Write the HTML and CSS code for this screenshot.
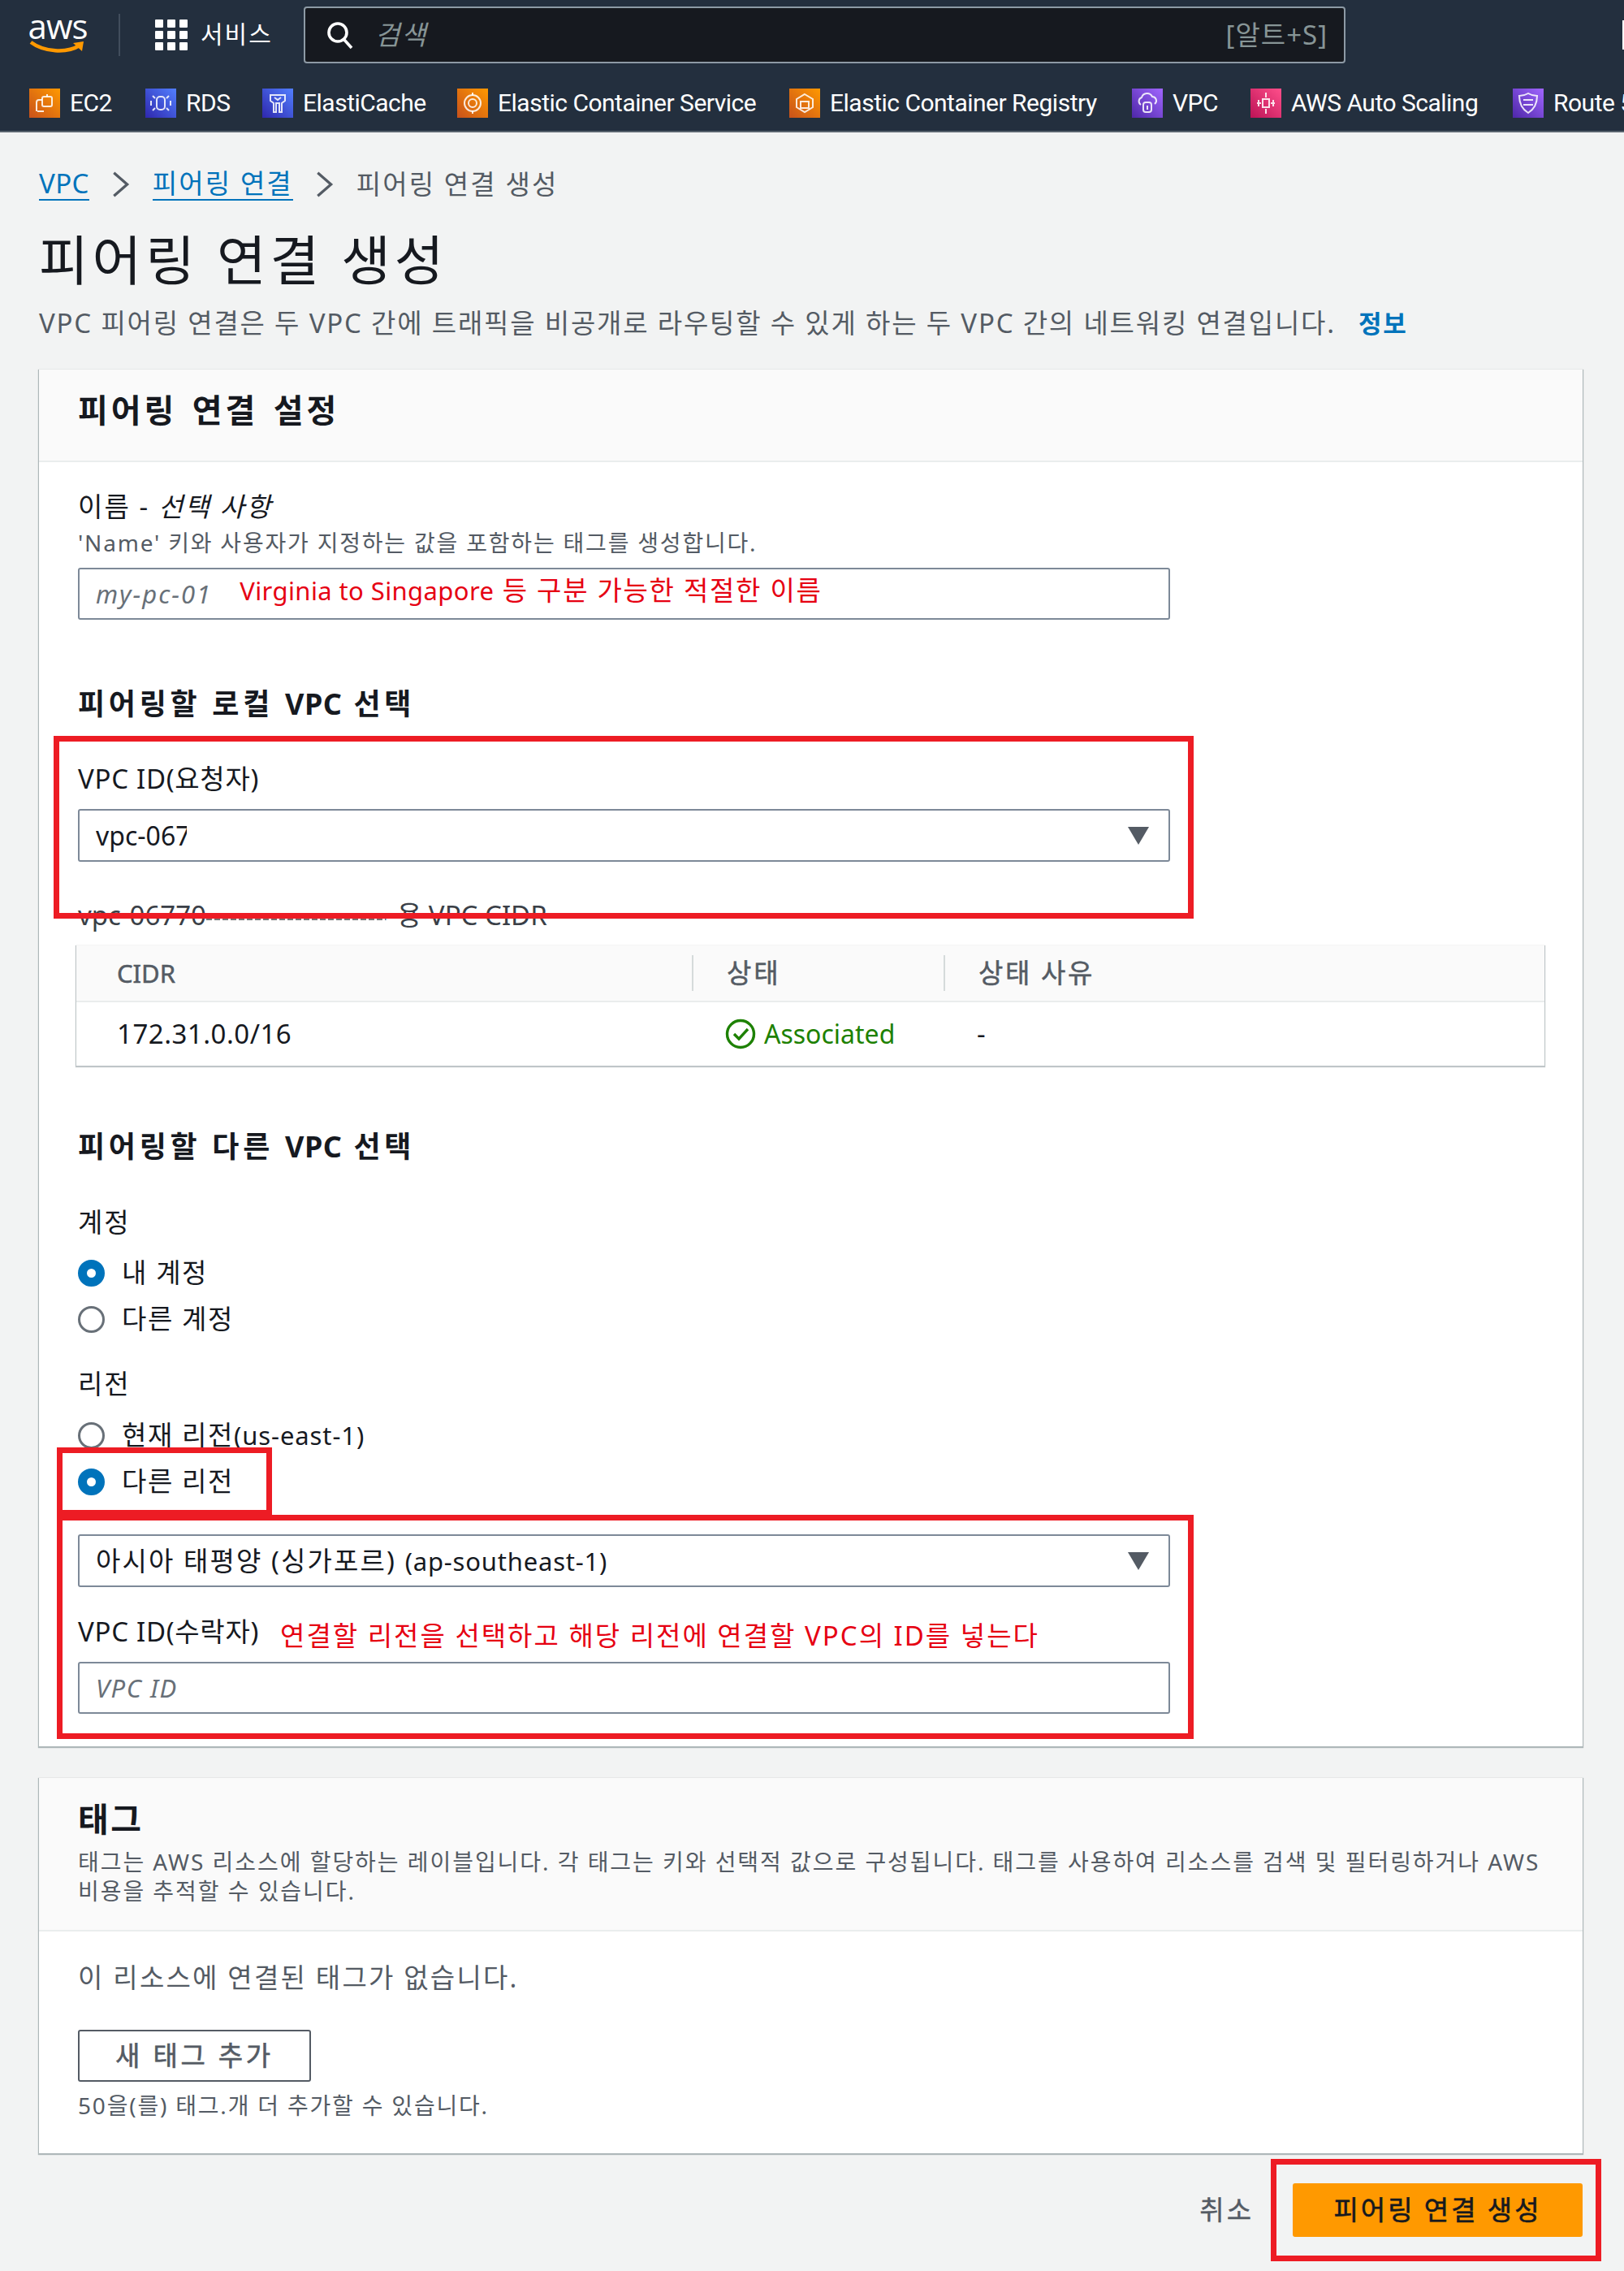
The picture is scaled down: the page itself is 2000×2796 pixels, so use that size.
FILE: index.html
```html
<!DOCTYPE html>
<html lang="ko">
<head>
<meta charset="utf-8">
<title>피어링 연결 생성</title>
<link rel="stylesheet" href="styles.css">
</head>
<body>
<div class="page">
  <header class="topbar">
    <div class="toprow">
      <div class="logo">
        <span class="logo-text">aws</span>
        <svg class="smile" viewBox="0 0 70 18"><path d="M2 3C18 15 46 17 62 7" fill="none" stroke="#f90" stroke-width="4.5"/><path d="M54 4l13-2-2 12z" fill="#f90"/></svg>
      </div>
      <div class="vsep"></div>
      <div class="grid-icon"><i></i><i></i><i></i><i></i><i></i><i></i><i></i><i></i><i></i></div>
      <span class="services">서비스</span>
      <div class="search">
        <svg class="search-icon" viewBox="0 0 36 36"><circle cx="16" cy="15" r="11" fill="none" stroke="#fff" stroke-width="3.6"/><path d="M24 24l9 10" stroke="#fff" stroke-width="3.6"/></svg>
        <span class="search-ph">검색</span>
        <span class="search-key">[알트+S]</span>
      </div>
    </div>
    <nav class="favs">
      <a class="fav w-ec2"><span class="ico orange"><svg viewBox="0 0 38 36"><rect x="16" y="10" width="12" height="12" rx="2"/><path d="M16 14h-4a3 3 0 0 0-3 3v11M22 10V7M10 28h8"/></svg></span>EC2</a>
      <a class="fav w-rds"><span class="ico blue"><svg viewBox="0 0 38 36"><rect x="14" y="10" width="10" height="16" rx="4"/><path d="M9 9l3 3M29 9l-3 3M9 27l3-3M29 27l-3-3M7 15v6M31 15v6"/></svg></span>RDS</a>
      <a class="fav w-cache"><span class="ico blue"><svg viewBox="0 0 38 36"><path d="M10 8h18v7l-4 3v11h-3V18h-4v11h-3V18l-4-3z"/><path d="M15 11l4 3 4-3"/></svg></span>ElastiCache</a>
      <a class="fav w-ecs"><span class="ico orange"><svg viewBox="0 0 38 36"><circle cx="19" cy="18" r="10"/><circle cx="19" cy="18" r="5"/><path d="M19 5v4M19 27v4"/></svg></span>Elastic Container Service</a>
      <a class="fav w-ecr"><span class="ico orange"><svg viewBox="0 0 38 36"><path d="M19 7l10 6v10l-10 6-10-6V13z"/><path d="M14 16h10v8H14z"/></svg></span>Elastic Container Registry</a>
      <a class="fav w-vpc"><span class="ico purple"><svg viewBox="0 0 38 36"><path d="M11 20a5 5 0 0 1 1-9 7 7 0 0 1 13-1 5 5 0 0 1 3 9"/><rect x="14" y="17" width="10" height="12" rx="3"/><path d="M19 21v5"/></svg></span>VPC</a>
      <a class="fav w-scale"><span class="ico pink"><svg viewBox="0 0 38 36"><rect x="15" y="13" width="8" height="10"/><path d="M19 5v6M19 25v6M8 18h5M25 18h5M10 14v8M28 14v8"/></svg></span>AWS Auto Scaling</a>
      <a class="fav w-route"><span class="ico purple"><svg viewBox="0 0 38 36"><path d="M19 6c5 3 8 3 11 3 0 9-3 16-11 21C11 25 8 18 8 9c3 0 6 0 11-3z"/><path d="M13 14h12M13 20h12"/></svg></span>Route 53</a>
    </nav>
    <div class="edge-mark"></div>
  </header>

  <main class="main">
    <div class="crumbs">
      <a class="link l-vpc">VPC</a>
      <svg class="chev" viewBox="0 0 22 32"><path d="M3 3l15 13L3 29" fill="none" stroke="#545b64" stroke-width="3"/></svg>
      <a class="link ko">피어링 연결</a>
      <svg class="chev" viewBox="0 0 22 32"><path d="M3 3l15 13L3 29" fill="none" stroke="#545b64" stroke-width="3"/></svg>
      <span class="ko crumb-cur">피어링 연결 생성</span>
    </div>
    <h1 class="title">피어링 연결 생성</h1>
    <p class="desc">VPC 피어링 연결은 두 VPC 간에 트래픽을 비공개로 라우팅할 수 있게 하는 두 VPC 간의 네트워킹 연결입니다.<a class="info">정보</a></p>

    <section class="card">
      <div class="card-head first"><h2 class="h-card">피어링 연결 설정</h2></div>
      <div class="card-body">
        <div class="label l-name">이름 - <em>선택 사항</em></div>
        <div class="help h-name">'Name' 키와 사용자가 지정하는 값을 포함하는 태그를 생성합니다.</div>
        <div class="field f-name"><span class="ph p-name">my-pc-01</span><span class="note n-name"><span class="lat">Virginia to Singapore</span> 등 구분 가능한 적절한 이름</span></div>

        <h3 class="h-sec s-local">피어링할 로컬 <span class="lat-h">VPC</span> 선택</h3>
        <div class="label l-req">VPC ID(요청자)</div>
        <div class="field f-req"><span class="clip">vpc-0677</span><svg class="caret" viewBox="0 0 26 22"><path d="M0 0h26L13 22z" fill="#545b64"/></svg></div>
        <div class="cidr-cap">vpc-06770<span class="scribble"></span>용 VPC CIDR</div>

        <div class="table">
          <div class="tr th">
            <div class="c1">CIDR</div><div class="c2 sep">상태</div><div class="c3 sep">상태 사유</div>
          </div>
          <div class="tr td">
            <div class="c1 cidr-val">172.31.0.0/16</div>
            <div class="c2 status"><svg class="ok" viewBox="0 0 38 38"><circle cx="19" cy="19" r="16.5" fill="none" stroke="#1d8102" stroke-width="3.4"/><path d="M11 19l6 6 11-12" fill="none" stroke="#1d8102" stroke-width="3.4"/></svg>Associated</div>
            <div class="c3">-</div>
          </div>
        </div>

        <h3 class="h-sec s-other">피어링할 다른 <span class="lat-h">VPC</span> 선택</h3>
        <div class="label l-acct">계정</div>
        <div class="radio r1"><span class="dot on"></span>내 계정</div>
        <div class="radio r2"><span class="dot"></span>다른 계정</div>
        <div class="label l-region">리전</div>
        <div class="radio r3"><span class="dot"></span>현재 리전<span class="lat-r">(us-east-1)</span></div>
        <div class="radio r2"><span class="dot on"></span>다른 리전</div>
        <div class="field f-region"><span class="val">아시아 태평양 (싱가포르) <span class="lat-v">(ap-southeast-1)</span></span><svg class="caret" viewBox="0 0 26 22"><path d="M0 0h26L13 22z" fill="#545b64"/></svg></div>
        <div class="label l-acc">VPC ID(수락자)<span class="note n-acc">연결할 리전을 선택하고 해당 리전에 연결할 VPC의 ID를 넣는다</span></div>
        <div class="field f-acc"><span class="ph p-acc">VPC ID</span></div>
      </div>
    </section>

    <section class="card second">
      <div class="card-head tags">
        <h2 class="h-tag">태그</h2>
        <p class="help tag-desc">태그는 AWS 리소스에 할당하는 레이블입니다. 각 태그는 키와 선택적 값으로 구성됩니다. 태그를 사용하여 리소스를 검색 및 필터링하거나 AWS<br>비용을 추적할 수 있습니다.</p>
      </div>
      <div class="card-body b2">
        <p class="empty">이 리소스에 연결된 태그가 없습니다.</p>
        <button class="btn-add">새 태그 추가</button>
        <div class="help h-tagcount">50을(를) 태그.개 더 추가할 수 있습니다.</div>
      </div>
    </section>

    <div class="footer">
      <span class="cancel">취소</span>
      <button class="btn-primary">피어링 연결 생성</button>
    </div>
  </main>

  <div class="redbox rb1"></div>
  <div class="redbox rb2"></div>
  <div class="redbox rb3"></div>
  <div class="redbox rb4"></div>
</div>
</body>
</html>
```
FILE: styles.css
```css
* { box-sizing: border-box; }
html, body { margin: 0; padding: 0; }
body {
  width: 2000px; height: 2796px; overflow: hidden;
  background: #f2f3f3; color: #16191f;
  font-family: "Noto Sans", "Noto Sans CJK KR", sans-serif;
  font-size: 33px; line-height: 40px;
}
.page { position: relative; width: 2000px; height: 2796px; overflow: hidden; }
h1, h2, h3, p { margin: 0; font: inherit; }

/* top bar */
.topbar { position: relative; height: 163px; background: #232f3e; border-bottom: 2px solid #59636e; color: #fff; overflow: hidden; }
.toprow { display: flex; align-items: flex-start; height: 96px; padding: 8px 0 0 32px; }
.logo { width: 78px; height: 62px; display: flex; flex-direction: column; align-items: center; margin-top: 8px; }
.logo-text { font-family: "Open Sans", sans-serif; font-size: 42px; line-height: 32px; letter-spacing: -1px; }
.smile { width: 70px; height: 18px; margin-top: 1px; }
.vsep { width: 2px; height: 52px; background: #414d5c; margin: 9px 0 0 36px; }
.grid-icon { display: grid; grid-template-columns: repeat(3, 10px); grid-auto-rows: 10px; gap: 4px 5px; margin: 16px 0 0 43px; }
.grid-icon i { background: #fff; border-radius: 1px; }
.services { font-size: 30px; line-height: 36px; margin: 16px 0 0 16px; letter-spacing: 2px; width: 86px; white-space: nowrap; flex: none; }
.search { display: flex; align-items: center; width: 1283px; height: 70px; margin-left: 41px; background: #16191f; border: 2px solid #8d9aa5; border-radius: 4px; padding: 0 20px 0 24px; flex: none; }
.search-icon { width: 36px; height: 36px; }
.search-ph { font-style: italic; color: #879596; font-size: 33px; margin-left: 26px; letter-spacing: 2px; }
.search-key { margin-left: auto; color: #879596; font-size: 33px; letter-spacing: 1px; }
.favs { display: flex; align-items: center; height: 36px; margin-top: 13px; padding-left: 36px; white-space: nowrap; font-size: 30px; letter-spacing: -.5px; font-family: Roboto, sans-serif; }
.fav { display: flex; align-items: center; flex: none; color: #fff; }
.w-ec2 { width: 143px; } .w-rds { width: 144px; } .w-cache { width: 240px; }
.w-ecs { width: 409px; } .w-ecr { width: 422px; } .w-vpc { width: 146px; }
.w-scale { width: 323px; } .w-route { width: 200px; }
.ico { width: 38px; height: 36px; margin-right: 12px; flex: none; display: block; }
.ico svg { display: block; width: 38px; height: 36px; fill: none; stroke: rgba(255,255,255,.85); stroke-width: 2; }
.orange { background: linear-gradient(45deg, #c8511b, #f90); }
.blue { background: linear-gradient(45deg, #2e27ad, #527fff); }
.purple { background: linear-gradient(45deg, #4d27a8, #a166ff); }
.pink { background: linear-gradient(45deg, #bc1356, #ff4f8b); }
.edge-mark { position: absolute; left: 1998px; top: 25px; width: 2px; height: 36px; background: #fff; }

/* main */
.main { padding: 0 51px 0 48px; }
.crumbs { display: flex; align-items: center; height: 44px; margin-top: 42px; white-space: nowrap; }
.link { color: #0073bb; border-bottom: 2px solid #0073bb; line-height: 38px; }
.l-vpc { font-size: 33px; letter-spacing: .4px; }
.ko { letter-spacing: 2.1px; }
.chev { width: 24px; height: 36px; margin: 0 27px; flex: none; }
.crumb-cur { color: #545b64; }
.title { font-size: 66px; line-height: 80px; margin-top: 30px; letter-spacing: 4.9px; font-weight: 400; }
.desc { line-height: 44px; margin-top: 17px; color: #545b64; letter-spacing: 1.8px; white-space: nowrap; }
.info { color: #0073bb; font-weight: 700; margin-left: 28px; font-size: 31px; }

.card { background: #fff; box-shadow: 0 1px 1px 1px rgba(0,28,36,.28); margin-top: 35px; }
.card.second { margin-top: 39px; }
.card-head { background: #fafafa; border-bottom: 2px solid #eaeded; padding: 0 48px; }
.card-head.first { height: 114px; padding-top: 28px; }
.h-card, .h-sec, .h-tag { font-weight: 700; line-height: 44px; }
.h-card { font-size: 40px; letter-spacing: 4px; word-spacing: 4px; }
.h-sec { font-size: 36px; letter-spacing: 4.7px; }
.lat-h { letter-spacing: .5px; }
.h-tag { font-size: 41px; letter-spacing: 2.5px; }
.card-body { padding: 0 48px 40px; }

.label { line-height: 40px; letter-spacing: 2px; }
.help { font-size: 28px; line-height: 32px; color: #545b64; letter-spacing: 1.8px; white-space: nowrap; }
.l-name { margin-top: 35px; letter-spacing: 2.1px; }
.h-name { margin-top: 8px; }
.field { display: flex; align-items: center; height: 64px; border: 2px solid #7d8998; border-radius: 3px; padding: 0 24px 0 20px; background: #fff; }
.f-name { margin-top: 15px; width: 1345px; }
.ph { font-style: italic; color: #687078; font-size: 31px; letter-spacing: 2px; }
.p-acc { letter-spacing: 1.5px; }
.note { color: #e60012; white-space: nowrap; }
.n-name { margin-left: 34px; position: relative; top: -4px; letter-spacing: 1.7px; }
.lat { font-size: 31px; letter-spacing: .4px; }
.s-local { margin-top: 82px; }
.l-req { margin-top: 50px; letter-spacing: .7px; }
.f-req { margin-top: 17px; width: 1345px; height: 65px; }
.clip { display: block; width: 112px; overflow: hidden; white-space: nowrap; font-size: 32px; }
.caret { width: 26px; height: 22px; margin-left: auto; }
.cidr-cap { margin-top: 46px; white-space: nowrap; color: #3a3f47; display: flex; align-items: center; }
.scribble { width: 222px; height: 7px; margin: 4px 13px 0 0; background: repeating-linear-gradient(90deg, #777 0 7px, #fff 7px 10px); border-right: 1px solid #7db7e0; }

.table { margin: 17px 0 0 -2px; width: 1808px; height: 148px; background: #fff; box-shadow: 0 1px 1px 1px rgba(0,28,36,.25); }
.tr { display: flex; align-items: center; }
.th { height: 70px; background: #fafafa; border-bottom: 2px solid #eaeded; color: #545b64; -webkit-text-stroke: .5px #545b64; }
.th .c1 { font-size: 31px; }
.td { height: 78px; }
.c1 { width: 758px; padding-left: 50px; }
.c2 { width: 310px; padding-left: 41px; }
.c3 { flex: 1; padding-left: 41px; }
.sep { border-left: 2px solid #d5dbdb; line-height: 44px; }
.th .c2 { letter-spacing: 3px; }
.th .c3 { letter-spacing: 2.6px; }
.cidr-val { letter-spacing: .5px; }
.status { display: flex; align-items: center; color: #1d8102; padding-left: 41px; font-size: 32px; }
.ok { width: 38px; height: 38px; margin-right: 10px; }

.s-other { margin-top: 78px; }
.l-acct { margin-top: 51px; }
.radio { display: flex; align-items: center; height: 48px; white-space: nowrap; letter-spacing: 1.6px; }
.lat-r { font-size: 31px; letter-spacing: .9px; }
.r1 { margin-top: 18px; }
.r2 { margin-top: 9px; }
.r3 { margin-top: 19px; }
.l-region { margin-top: 36px; }
.dot { width: 33px; height: 33px; border-radius: 50%; border: 3px solid #687078; margin-right: 21px; flex: none; background: #fff; }
.dot.on { border: 11px solid #0073bb; }
.f-region { margin-top: 41px; width: 1345px; height: 65px; }
.val { letter-spacing: 2.1px; white-space: nowrap; }
.lat-v { font-size: 31px; letter-spacing: .8px; }
.l-acc { margin-top: 35px; display: flex; white-space: nowrap; letter-spacing: .7px; }
.n-acc { margin-left: 26px; letter-spacing: 2px; position: relative; top: 5px; }
.f-acc { margin-top: 17px; width: 1345px; }

.tags { height: 189px; padding-top: 28px; }
.tag-desc { margin-top: 13px; line-height: 36px; letter-spacing: 1.95px; }
.b2 { padding-bottom: 43px; }
.empty { margin-top: 37px; color: #545b64; line-height: 40px; letter-spacing: 2.2px; }
.btn-add { display: block; width: 287px; height: 64px; margin-top: 44px; background: #fff; border: 2px solid #545b64; border-radius: 3px; font: inherit; color: #545b64; -webkit-text-stroke: .6px #545b64; letter-spacing: 3.7px; padding: 0; }
.h-tagcount { margin-top: 13px; }

.footer { display: flex; justify-content: flex-end; align-items: center; margin-top: 37px; }
.cancel { color: #545b64; -webkit-text-stroke: .4px #545b64; letter-spacing: 3px; margin-right: 48px; }
.btn-primary { width: 357px; height: 66px; background: #f90; border: 0; border-radius: 3px; font: inherit; color: #16191f; -webkit-text-stroke: .6px #16191f; letter-spacing: 2.9px; padding: 0; }

/* annotation frames drawn over the page */
.redbox { position: absolute; border: 7px solid #ed1c24; pointer-events: none; }
.rb1 { left: 66px; top: 906px; width: 1404px; height: 225px; }
.rb2 { left: 70px; top: 1782px; width: 265px; height: 84px; }
.rb3 { left: 70px; top: 1865px; width: 1400px; height: 276px; }
.rb4 { left: 1565px; top: 2658px; width: 407px; height: 126px; }
```
